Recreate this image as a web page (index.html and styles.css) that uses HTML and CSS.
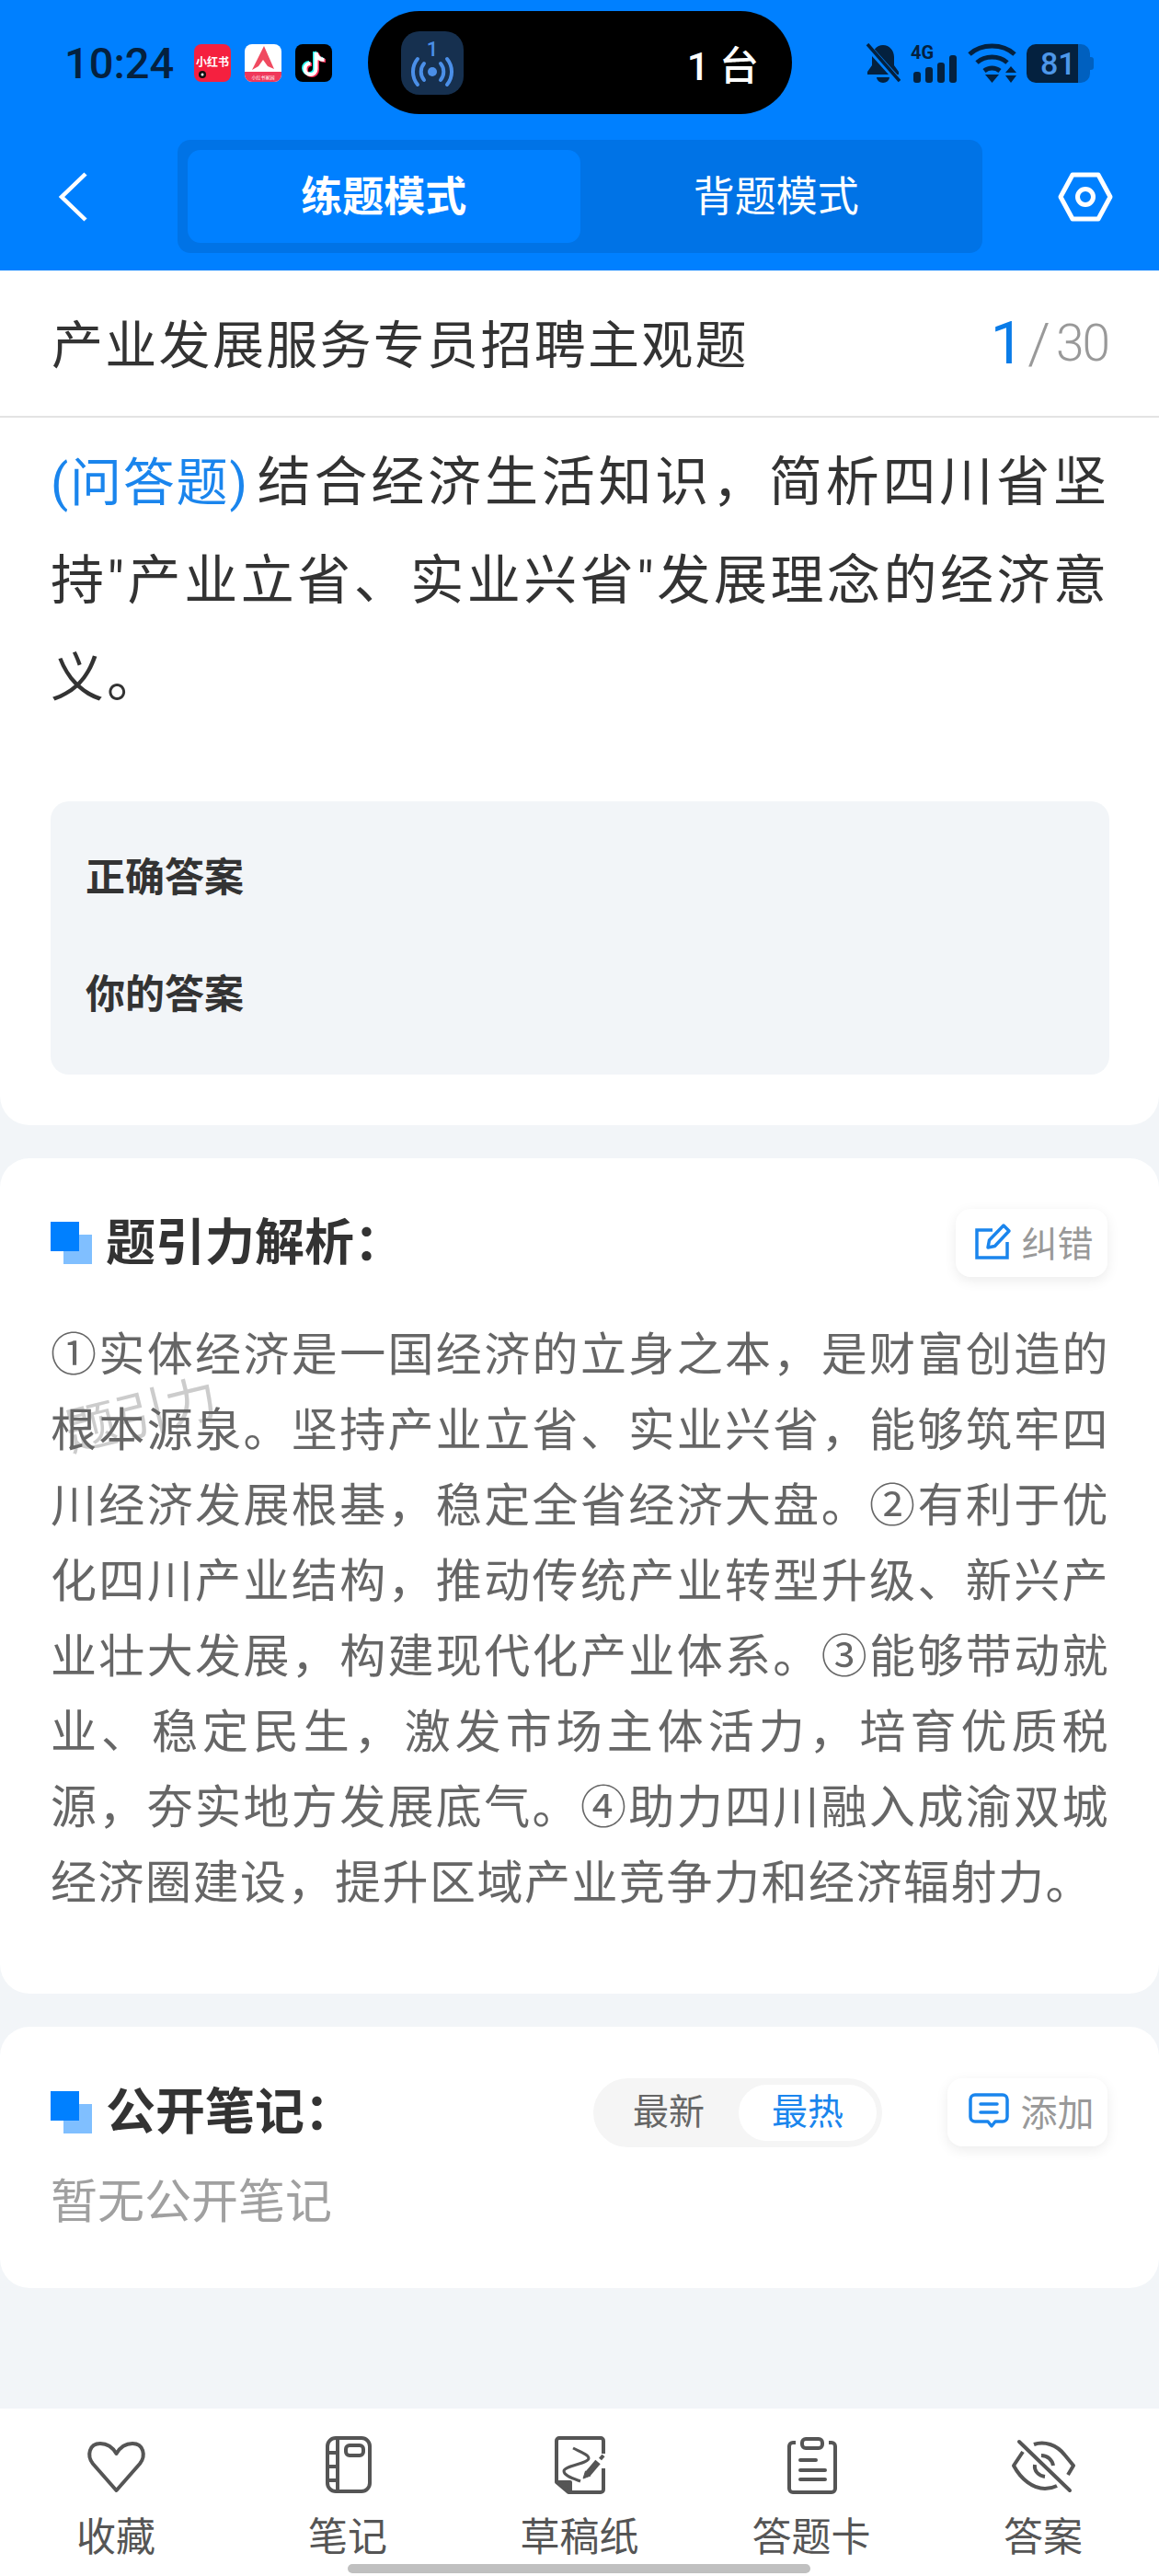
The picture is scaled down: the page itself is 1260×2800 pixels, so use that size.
FILE: index.html
```html
<!DOCTYPE html>
<html lang="zh-CN">
<head>
  <meta charset="utf-8">
  <title>题引力</title>
  <link rel="stylesheet" href="styles.css">
</head>
<body>
  <div class="screen">
    <header class="top">
      <div class="status">
        <span class="clock">10:24</span>
        <div class="apps">
          <svg class="app" viewBox="0 0 40 41">
            <rect width="40" height="41" rx="8" fill="#f5203f"/>
            <text x="20" y="24" text-anchor="middle" class="app-txt">小红书</text>
            <circle cx="9" cy="33" r="4" fill="#111"/>
            <circle cx="9" cy="33" r="1.5" fill="#fff"/>
          </svg>
          <svg class="app" viewBox="0 0 40 41">
            <rect width="40" height="41" rx="8" fill="#fff"/>
            <path d="M0 30H40V33a8 8 0 0 1-8 8H8a8 8 0 0 1-8-8Z" fill="#f0385a"/>
            <path d="M21 2 L32 27 L25 24 L20 17 L15 24 L8 28Z" fill="#f04a60"/>
            <text x="20" y="38" text-anchor="middle" class="app-txt-sm">小红书家园</text>
          </svg>
          <svg class="app" viewBox="0 0 40 41">
            <rect width="40" height="41" rx="8" fill="#000"/>
            <path d="M21 8V26a6 6 0 1 1-6-6M21 8c1 5 4 8 9 8" fill="none" stroke="#25f4ee" stroke-width="4"/>
            <path d="M24 10V28a6 6 0 1 1-6-6M24 10c1 5 4 8 9 8" fill="none" stroke="#fe2c55" stroke-width="4"/>
            <path d="M22.500 9V27a6 6 0 1 1-6-6M22.500 9c1 5 4 8 9 8" fill="none" stroke="#fff" stroke-width="4"/>
          </svg>
        </div>
        <div class="pill">
          <div class="pill-icon">
            <svg width="68" height="69" viewBox="0 0 68 69" fill="none" stroke="#4b8fe8" stroke-width="4" stroke-linecap="round">
              <text x="34" y="27" text-anchor="middle" class="pill-num">1</text>
              <circle cx="34" cy="44" r="5" fill="#4b8fe8" stroke="none"/>
              <path d="M25 35a14 14 0 0 0 0 18M43 35a14 14 0 0 1 0 18"/>
              <path d="M18 30a22 22 0 0 0 0 28M50 30a22 22 0 0 1 0 28"/>
            </svg>
          </div>
          <span class="pill-count">1 台</span>
        </div>
        <div class="sys">
          <svg width="38" height="43" viewBox="0 0 38 43" fill="#04213f">
            <path d="M19 2c-7 0-12 6-12 13v9l-5 7v3h34v-3l-5-7v-9c0-7-5-13-12-13Z"/>
            <path d="M12 37h14a7 6 0 0 1-14 0Z"/>
            <path d="M1 2 L36 41" stroke="#0080ff" stroke-width="7"/>
            <path d="M2 1 L37 41" stroke="#04213f" stroke-width="3.500"/>
          </svg>
          <svg class="net-icon" width="51" height="49" viewBox="0 -6 51 49">
            <text x="0" y="17" class="net">4G</text>
            <g fill="#04213f">
              <rect x="3" y="31" width="8" height="12" rx="3"/>
              <rect x="16" y="26" width="8" height="17" rx="3"/>
              <rect x="29" y="21" width="8" height="22" rx="3"/>
              <rect x="42" y="13" width="8" height="30" rx="3"/>
            </g>
          </svg>
          <svg width="53" height="43" viewBox="0 0 53 43" fill="none" stroke="#04213f" stroke-width="5">
            <path d="M2 12C15 0 38 0 51 12"/>
            <path d="M10 21C19 13 34 13 43 21"/>
            <path d="M18 30C23 26 30 26 35 30"/>
            <path d="M19 34H34L26.500 43Z" fill="#04213f" stroke="none"/>
            <path d="M41 32H53L47 25ZM41 35H53L47 43Z" fill="#04213f" stroke="none"/>
          </svg>
          <div class="battery">
            <span class="battery-level">81</span>
            <span class="battery-rest"></span>
            <span class="battery-nub"></span>
          </div>
        </div>
      </div>
      <nav class="modes">
        <svg class="back" width="34" height="54" viewBox="0 0 34 54" fill="none" stroke="#fff" stroke-width="4.500">
          <path d="M31 2 L5 27 L31 52"/>
        </svg>
        <div class="mode-switch">
          <span class="mode on">练题模式</span>
          <span class="mode">背题模式</span>
        </div>
        <svg class="cog" width="64" height="58" viewBox="0 0 64 58" fill="none" stroke="#fff" stroke-width="5" stroke-linejoin="round">
          <path d="M18 5H46L59 29L46 53H18L5 29Z"/>
          <circle cx="32" cy="29" r="8.500"/>
        </svg>
      </nav>
    </header>

    <div class="paper-title">
      <span class="paper-name">产业发展服务专员招聘主观题</span>
      <span class="paper-page"><b>1</b><i>/</i>30</span>
    </div>

    <section class="card question">
      <p class="stem"><span class="stem-type">(问答题)</span>结合经济生活知识，简析四川省坚持"产业立省、实业兴省"发展理念的经济意义。</p>
      <div class="answers">
        <div class="answer-row">正确答案</div>
        <div class="answer-row">你的答案</div>
      </div>
    </section>

    <section class="card analysis">
      <div class="card-head">
        <span class="mark"></span>
        <h3>题引力解析：</h3>
        <a class="mini-btn">
          <svg width="40" height="40" viewBox="0 0 40 40" fill="none" stroke="#1a85ed" stroke-width="3.500">
            <path d="M19 8H2V38H35V21"/>
            <path d="M14 27L15.500 19L31 3L37 9L21.500 25.500Z" stroke-linejoin="round"/>
          </svg>
          纠错
        </a>
      </div>
      <p class="analysis-text">①实体经济是一国经济的立身之本，是财富创造的根本源泉。坚持产业立省、实业兴省，能够筑牢四川经济发展根基，稳定全省经济大盘。②有利于优化四川产业结构，推动传统产业转型升级、新兴产业壮大发展，构建现代化产业体系。③能够带动就业、稳定民生，激发市场主体活力，培育优质税源，夯实地方发展底气。④助力四川融入成渝双城经济圈建设，提升区域产业竞争力和经济辐射力。</p>
      <span class="watermark">题引力</span>
    </section>

    <section class="card notes">
      <div class="card-head">
        <span class="mark"></span>
        <h3>公开笔记：</h3>
        <div class="sort">
          <span class="sort-item">最新</span>
          <span class="sort-item on">最热</span>
        </div>
        <a class="mini-btn">
          <svg width="44" height="38" viewBox="0 0 44 38" fill="none" stroke="#1a85ed" stroke-width="3.500" stroke-linejoin="round">
            <path d="M7 2H37a5 5 0 0 1 5 5V26a5 5 0 0 1-5 5H29L25 36L21 31H7a5 5 0 0 1-5-5V7a5 5 0 0 1 5-5Z"/>
            <path d="M13 12H31M13 21H31" stroke-linecap="round"/>
          </svg>
          添加
        </a>
      </div>
      <p class="empty">暂无公开笔记</p>
    </section>

    <footer class="tabbar">
      <div class="tab">
        <svg width="70" height="64" viewBox="0 0 70 64" class="tab-icon">
          <path d="M35.500 59L10 30C3 21 6 8 18 8C26 8 32 13 35.500 19C39 13 45 8 53 8C65 8 68 21 61 30Z"/>
        </svg>
        <span>收藏</span>
      </div>
      <div class="tab">
        <svg width="70" height="64" viewBox="0 0 70 64" class="tab-icon">
          <rect x="13" y="2" width="46" height="58" rx="9"/>
          <path d="M24 2V60M13 18H24M13 33H24M13 48H24"/>
          <rect x="33" y="10" width="19" height="11" rx="4"/>
        </svg>
        <span>笔记</span>
      </div>
      <div class="tab">
        <svg width="70" height="64" viewBox="0 0 70 64" class="tab-icon">
          <path d="M61 19V5a3 3 0 0 0-3-3H13a3 3 0 0 0-3 3V50L23 61H58a3 3 0 0 0 3-3V35"/>
          <path d="M11 50H25V61Z" class="solid"/>
          <path d="M28 13C36 17 45 20 45 24C45 30 18 32 18 38C18 43 28 46 36 49" stroke-width="3"/>
          <path d="M44 41L55 28" stroke-width="7" stroke-linecap="butt"/>
          <path d="M39 46L41.500 38L47 43Z" class="solid" stroke-width="1"/>
          <path d="M57.500 25L61 21" stroke-width="4"/>
        </svg>
        <span>草稿纸</span>
      </div>
      <div class="tab">
        <svg width="70" height="64" viewBox="0 0 70 64" class="tab-icon">
          <path d="M18 7H15a4 4 0 0 0-4 4V57a4 4 0 0 0 4 4H57a4 4 0 0 0 4-4V11a4 4 0 0 0-4-4H54"/>
          <rect x="25" y="3" width="22" height="10" rx="4"/>
          <path d="M23 26H40M23 37H50M23 47H50" stroke-linecap="round"/>
        </svg>
        <span>答题卡</span>
      </div>
      <div class="tab">
        <svg width="70" height="64" viewBox="0 0 70 64" class="tab-icon">
          <path d="M25 9C36 5 50 9 59 21L68 32L62 42"/>
          <path d="M13 17L3 32C11 47 24 57 37 57C42 57 46 56 50 54"/>
          <path d="M9 6L64 59" stroke-linecap="round"/>
          <path d="M33 21C40 21 45 26 46 32"/>
          <path d="M26 31C25 38 30 43 37 44"/>
        </svg>
        <span>答案</span>
      </div>
    </footer>
    <div class="home-bar"></div>
  </div>
</body>
</html>
```

FILE: styles.css
```css
* { box-sizing: border-box; }
html, body { margin: 0; padding: 0; }
body {
  background-color: #f2f5f8;
  font-family: Roboto, "Noto Sans CJK SC", sans-serif;
  color: #333;
}
p, h3 { margin: 0; }

.screen {
  position: relative;
  width: 1260px;
  height: 2800px;
  overflow: hidden;
  display: flex;
  flex-direction: column;
  background-color: #f2f5f8;
}

/* blue header */
.top {
  height: 294px;
  background-color: #0080ff;
}
.status {
  display: flex;
  align-items: flex-start;
  height: 152px;
  padding-left: 70px;
}
.clock {
  width: 119px;
  margin-top: 42px;
  font-size: 47px;
  line-height: 54px;
  font-weight: 500;
  color: #04213f;
  white-space: nowrap;
}
.apps {
  display: flex;
  gap: 15px;
  margin: 48px 0 0 22px;
}
.app { width: 40px; height: 41px; display: block; }
.app-txt { font-size: 12px; font-weight: 700; fill: #fff; }
.app-txt-sm { font-size: 5px; fill: #fff; }

.pill {
  display: flex;
  align-items: center;
  width: 461px;
  height: 112px;
  margin: 12px 0 0 39px;
  padding: 0 36px 0 36px;
  background-color: #000;
  border-radius: 56px;
}
.pill-icon {
  width: 68px;
  height: 69px;
  background-color: #16304f;
  border-radius: 20px;
}
.pill-num { font-size: 22px; font-weight: 500; fill: #4b8fe8; stroke: none; }
.pill-count {
  margin-left: auto;
  font-size: 43px;
  font-weight: 500;
  color: #fff;
  white-space: nowrap;
}

.sys {
  display: flex;
  align-items: flex-end;
  gap: 11px;
  height: 43px;
  margin: 47px 0 0 80px;
}
.net { font-size: 20px; font-weight: 700; fill: #04213f; }
.battery {
  display: flex;
  align-items: center;
  height: 42px;
}
.battery-level {
  width: 56px;
  height: 42px;
  padding-left: 15px;
  background-color: #04213f;
  border-radius: 10px 0 0 10px;
  color: #4d97ea;
  font-size: 34px;
  line-height: 42px;
  font-weight: 500;
}
.battery-rest {
  width: 13px;
  height: 42px;
  background-color: #0060bf;
  border-radius: 0 10px 10px 0;
}
.battery-nub {
  width: 4px;
  height: 14px;
  background-color: #0060bf;
  border-radius: 0 3px 3px 0;
}

.modes {
  display: flex;
  align-items: center;
  height: 123px;
  padding-left: 62px;
}
.back { display: block; }
.mode-switch {
  display: flex;
  width: 875px;
  height: 123px;
  margin-left: 97px;
  padding: 11px;
  background-color: #0073e6;
  border-radius: 14px;
}
.mode {
  flex: 1;
  color: #fff;
  font-size: 45px;
  line-height: 103px;
  height: 101px;
  text-align: center;
  border-radius: 14px;
}
.mode.on {
  background-color: #0080ff;
  font-weight: 700;
}
.cog { margin-left: 80px; display: block; }

/* paper name and page counter */
.paper-title {
  display: flex;
  align-items: center;
  justify-content: space-between;
  height: 160px;
  padding: 0 55px 6px 56px;
  background-color: #fff;
  border-bottom: 2px solid #e3e3e3;
}
.paper-name {
  font-size: 56px;
  letter-spacing: 2.3px;
  color: #333;
}
.paper-page {
  display: flex;
  align-items: center;
  margin-top: 6px;
  font-size: 55px;
  font-weight: 300;
  letter-spacing: -2px;
  color: #999;
}
.paper-page b {
  font-size: 65px;
  font-weight: 400;
  letter-spacing: 0;
  color: #0a7ce8;
}
.paper-page i {
  margin: 0 6px 0 4px;
  font-size: 62px;
  letter-spacing: 0;
  font-style: normal;
}

.card {
  position: relative;
  background-color: #fff;
  border-radius: 32px;
  padding: 0 54px 0 55px;
}

.question {
  padding-top: 17px;
  padding-bottom: 55px;
  border-radius: 0 0 32px 32px;
}
.stem {
  font-size: 58px;
  line-height: 106px;
  letter-spacing: 3px;
  text-align: justify;
  color: #333;
}
.stem-type {
  margin-right: 9px;
  font-size: 56px;
  letter-spacing: 1px;
  color: #1a85ed;
}
.answers {
  height: 297px;
  margin-top: 81px;
  padding-top: 20px;
  background-color: #f2f5f8;
  border-radius: 20px;
}
.answer-row {
  height: 127px;
  padding-left: 38px;
  font-size: 43px;
  line-height: 127px;
  font-weight: 700;
  color: #333;
}

.analysis {
  margin-top: 36px;
  padding-top: 55px;
  padding-bottom: 79px;
}
.card-head {
  display: flex;
  align-items: center;
  height: 74px;
}
.card-head h3 {
  margin-left: 15px;
  padding-bottom: 10px;
  font-size: 54px;
  font-weight: 700;
  color: #333;
  white-space: nowrap;
}
.mark {
  position: relative;
  flex: none;
  width: 45px;
  height: 46px;
}
.mark::before,
.mark::after {
  content: "";
  position: absolute;
  width: 31px;
  height: 32px;
}
.mark::before { right: 0; bottom: 0; background-color: #80bfff; }
.mark::after { left: 0; top: 0; background-color: #0080ff; }

.mini-btn {
  display: flex;
  align-items: center;
  justify-content: center;
  gap: 10px;
  flex: none;
  width: 165px;
  height: 74px;
  margin: 0 2px 0 auto;
  padding: 0 0 5px 6px;
  background-color: #fff;
  border-radius: 16px;
  box-shadow: 0 4px 14px rgba(0,0,0,0.08);
  font-size: 39px;
  color: #999;
  white-space: nowrap;
}
.analysis-text {
  position: relative;
  z-index: 1;
  margin-top: 44px;
  font-size: 50px;
  line-height: 82px;
  letter-spacing: 1.5px;
  text-align: justify;
  color: #666;
}
.watermark {
  position: absolute;
  left: 70px;
  top: 240px;
  font-size: 56px;
  line-height: 80px;
  color: #ccc;
  transform: rotate(-14deg);
  white-space: nowrap;
}

.notes {
  margin-top: 36px;
  padding-top: 56px;
  padding-bottom: 58px;
}
.sort {
  display: flex;
  align-items: center;
  flex: none;
  width: 314px;
  height: 75px;
  margin-left: auto;
  padding: 0 6px 0 0;
  background-color: #f5f5f5;
  border-radius: 38px;
}
.sort-item {
  width: 158px;
  padding-left: 6px;
  font-size: 39px;
  line-height: 61px;
  text-align: center;
  color: #666;
}
.sort-item.on {
  width: 150px;
  padding-left: 0;
  background-color: #fff;
  border-radius: 31px;
  color: #1a85ed;
}
.notes .mini-btn {
  margin-left: 71px;
  width: 174px;
  gap: 13px;
  padding-left: 8px;
  font-size: 40px;
}
.empty {
  margin-top: 26px;
  font-size: 51px;
  line-height: 70px;
  color: #a0a0a0;
}

/* bottom tools */
.tabbar {
  display: flex;
  margin-top: auto;
  height: 182px;
  padding-top: 30px;
  background-color: #fff;
}
.tab {
  flex: 1;
  display: flex;
  flex-direction: column;
  align-items: center;
  color: #555;
  font-size: 43px;
  line-height: 50px;
}
.tab span { margin-top: 21px; }
.tab-icon {
  display: block;
  fill: none;
  stroke: #555;
  stroke-width: 4;
  stroke-linejoin: round;
}
.tab-icon .solid { fill: #555; }

.home-bar {
  position: absolute;
  left: 378px;
  bottom: 3px;
  width: 503px;
  height: 10px;
  background-color: #c0c0c0;
  border-radius: 5px;
}
```
